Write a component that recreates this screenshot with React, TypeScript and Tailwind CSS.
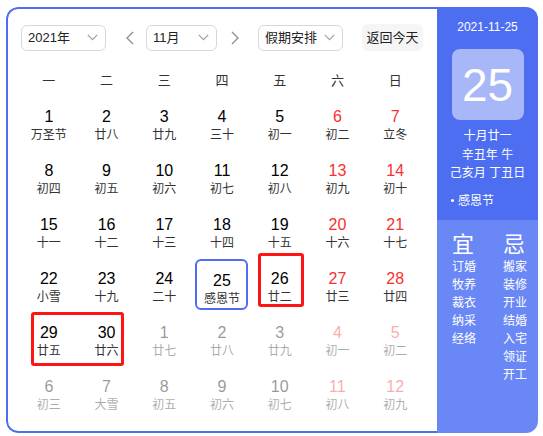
const font = "font-['Liberation_Sans','Noto_Sans_CJK_SC',sans-serif]";

type Day = { n: number; l: string; out?: boolean };

const days: Day[] = [
  { n: 1, l: "万圣节" }, { n: 2, l: "廿八" }, { n: 3, l: "廿九" }, { n: 4, l: "三十" }, { n: 5, l: "初一" }, { n: 6, l: "初二" }, { n: 7, l: "立冬" },
  { n: 8, l: "初四" }, { n: 9, l: "初五" }, { n: 10, l: "初六" }, { n: 11, l: "初七" }, { n: 12, l: "初八" }, { n: 13, l: "初九" }, { n: 14, l: "初十" },
  { n: 15, l: "十一" }, { n: 16, l: "十二" }, { n: 17, l: "十三" }, { n: 18, l: "十四" }, { n: 19, l: "十五" }, { n: 20, l: "十六" }, { n: 21, l: "十七" },
  { n: 22, l: "小雪" }, { n: 23, l: "十九" }, { n: 24, l: "二十" }, { n: 25, l: "感恩节" }, { n: 26, l: "廿二" }, { n: 27, l: "廿三" }, { n: 28, l: "廿四" },
  { n: 29, l: "廿五" }, { n: 30, l: "廿六" }, { n: 1, l: "廿七", out: true }, { n: 2, l: "廿八", out: true }, { n: 3, l: "廿九", out: true }, { n: 4, l: "初一", out: true }, { n: 5, l: "初二", out: true },
  { n: 6, l: "初三", out: true }, { n: 7, l: "大雪", out: true }, { n: 8, l: "初五", out: true }, { n: 9, l: "初六", out: true }, { n: 10, l: "初七", out: true }, { n: 11, l: "初八", out: true }, { n: 12, l: "初九", out: true },
];

const Chevron = () => (
  <svg width="11" height="7" viewBox="0 0 11 7" fill="none">
    <polyline points="0.8,0.8 5.5,5.6 10.2,0.8" stroke="#9aa0b2" strokeWidth="1.2" />
  </svg>
);

const Select = ({ label, w }: { label: string; w: string }) => (
  <div className={`${w} h-[26px] flex items-center justify-between pl-[6px] pr-[7px] border border-[#d7d8de] rounded-[6px] text-[13px] text-[#222]`}>
    <span>{label}</span>
    <Chevron />
  </div>
);

const Arrow = ({ dir }: { dir: "l" | "r" }) => (
  <svg width="8" height="14" viewBox="0 0 8 14" fill="none">
    <polyline points={dir === "l" ? "7,1 1,7 7,13" : "1,1 7,7 1,13"} stroke="#8f8f96" strokeWidth="1.4" />
  </svg>
);

export default function App() {
  const yi = ["订婚", "牧养", "裁衣", "纳采", "经络"];
  const ji = ["搬家", "装修", "开业", "结婚", "入宅", "领证", "开工"];
  return (
    <div className={`relative w-[543px] h-[436px] bg-white pl-[6px] pt-[7px] ${font}`}>
      <div className="flex w-[532px] h-[426px] rounded-[12px] overflow-hidden">
        <div className="w-[431px] h-full border-2 border-r-0 border-[#4e6ef2] rounded-l-[12px] bg-white pt-[15px]">
          <div className="flex items-center pl-[13px]">
            <Select label="2021年" w="w-[85px]" />
            <div className="ml-[20px]"><Arrow dir="l" /></div>
            <div className="ml-[12px]"><Select label="11月" w="w-[71px]" /></div>
            <div className="ml-[14px]"><Arrow dir="r" /></div>
            <div className="ml-[19px]"><Select label="假期安排" w="w-[85px]" /></div>
            <div className="ml-[19px] w-[61px] h-[27px] flex items-center justify-center rounded-[6px] bg-[#f5f5f6] text-[13px] text-[#222]">返回今天</div>
          </div>
          <div className="ml-[12px] w-[404px] mt-[18px] mb-[4px] h-[24px] grid grid-cols-7 text-[13px] text-[#333]">
            {["一", "二", "三", "四", "五", "六", "日"].map((d) => (
              <div key={d} className="flex items-center justify-center">{d}</div>
            ))}
          </div>
          <div className="ml-[12px] w-[404px] grid grid-cols-7 gap-y-[3px]">
            {days.map((d, i) => {
              const weekend = i % 7 >= 5;
              const today = !d.out && d.n === 25;
              return (
                <div key={i} className="h-[51px] flex justify-center">
                  <div
                    className={`w-[53px] h-[51px] flex flex-col items-center pt-[10px] rounded-[6px] ${today ? "border-2 border-[#4e6ef2] pt-[8px]" : ""} ${d.out ? "opacity-40" : ""}`}
                  >
                    <div className={`text-[16px] leading-[20px] ${weekend ? "text-[#f73131]" : "text-black"}`}>{d.n}</div>
                    <div className="text-[12px] leading-[16px] text-[#333]">{d.l}</div>
                  </div>
                </div>
              );
            })}
          </div>
        </div>
        <div className="w-[101px] h-full flex flex-col text-white">
          <div className="h-[213px] bg-[#4e6ef2] flex flex-col items-center pt-[12px]">
            <div className="text-[12px] leading-[16px]">2021-11-25</div>
            <div className="mt-[14px] w-[72px] h-[71px] rounded-[8px] bg-[#a7b7f8] flex items-center justify-center text-[46px] leading-none">25</div>
            <div className="mt-[7px] text-[12px] leading-[18.5px] text-center">
              <div>十月廿一</div>
              <div>辛丑年 牛</div>
              <div>己亥月 丁丑日</div>
            </div>
            <div className="self-start pl-[14px] mt-[10px] text-[12px] leading-[16px] flex items-center">
              <span className="w-[3px] h-[3px] rounded-full bg-white mr-[4px]" />
              感恩节
            </div>
          </div>
          <div className="flex-1 bg-[#6a88f5] flex pl-[15px] pt-[12px]">
            <div className="w-[51px] flex flex-col">
              <div className="text-[22px] leading-[26px]">宜</div>
              {yi.map((t) => (
                <div key={t} className="text-[12px] leading-[18px]">{t}</div>
              ))}
            </div>
            <div className="flex flex-col">
              <div className="text-[22px] leading-[26px]">忌</div>
              {ji.map((t) => (
                <div key={t} className="text-[12px] leading-[18px]">{t}</div>
              ))}
            </div>
          </div>
        </div>
      </div>
      <div className="absolute left-[258px] top-[253px] w-[46px] h-[54px] border-[3px] border-[#ff1414] rounded-[3px]" />
      <div className="absolute left-[31px] top-[312px] w-[93px] h-[54px] border-[3px] border-[#ff1414] rounded-[3px]" />
    </div>
  );
}
